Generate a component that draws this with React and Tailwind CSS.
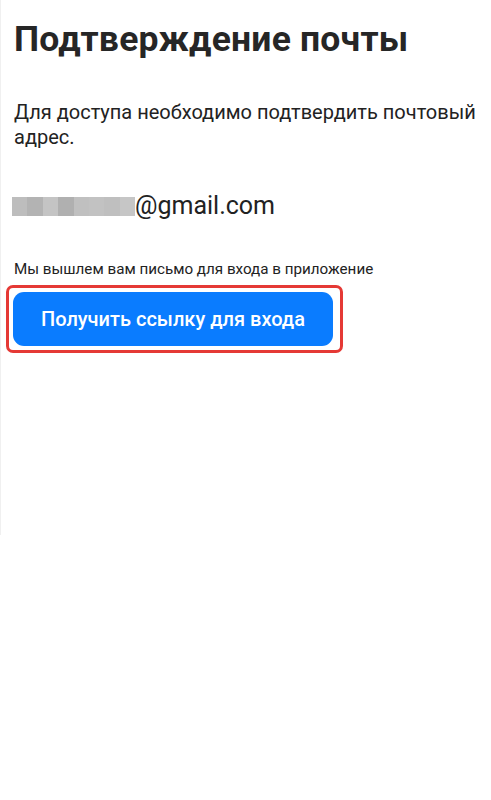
export default function App() {
  const blur = ['#bdbdbd', '#b3b3b3', '#c4c4c4', '#b0b0b0', '#c0c0c0', '#c2c2c2', '#bfbfbf', '#c6c6c6'];

  return (
    <div className="min-h-[800px] bg-white font-['Roboto',sans-serif] text-[#222]">
      <div className="border-l border-[#f0f0f0] h-[535px] pl-[13px] pt-[16px]">
        <h1 className="text-[35.5px] leading-[46px] font-bold tracking-[0.2px] text-[#262626]">Подтверждение почты</h1>

        <p className="mt-[38px] text-[20px] leading-[25px] text-[#222] pr-1">
          Для доступа необходимо подтвердить почтовый адрес.
        </p>

        <div className="mt-[41px] flex items-center">
          <div className="-ml-[2px] flex h-[19px] w-[123px]">
            {blur.map((c, i) => (
              <div key={i} className="flex-1" style={{ backgroundColor: c }} />
            ))}
          </div>
          <span className="text-[25px] leading-[30px] text-[#222]">@gmail.com</span>
        </div>

        <p className="mt-[38px] text-[15.2px] leading-[20px] text-[#222]">
          Мы вышлем вам письмо для входа в приложение
        </p>

        <div className="mt-[6px] -ml-[8px] w-[337px] rounded-[7px] border-[3px] border-[#e53935] py-[4px] pl-[4px] pr-[7px]">
          <button className="h-[54px] w-full rounded-[11px] bg-[#0a7cff] text-[20px] font-medium text-white">
            Получить ссылку для входа
          </button>
        </div>
      </div>
    </div>
  );
}
